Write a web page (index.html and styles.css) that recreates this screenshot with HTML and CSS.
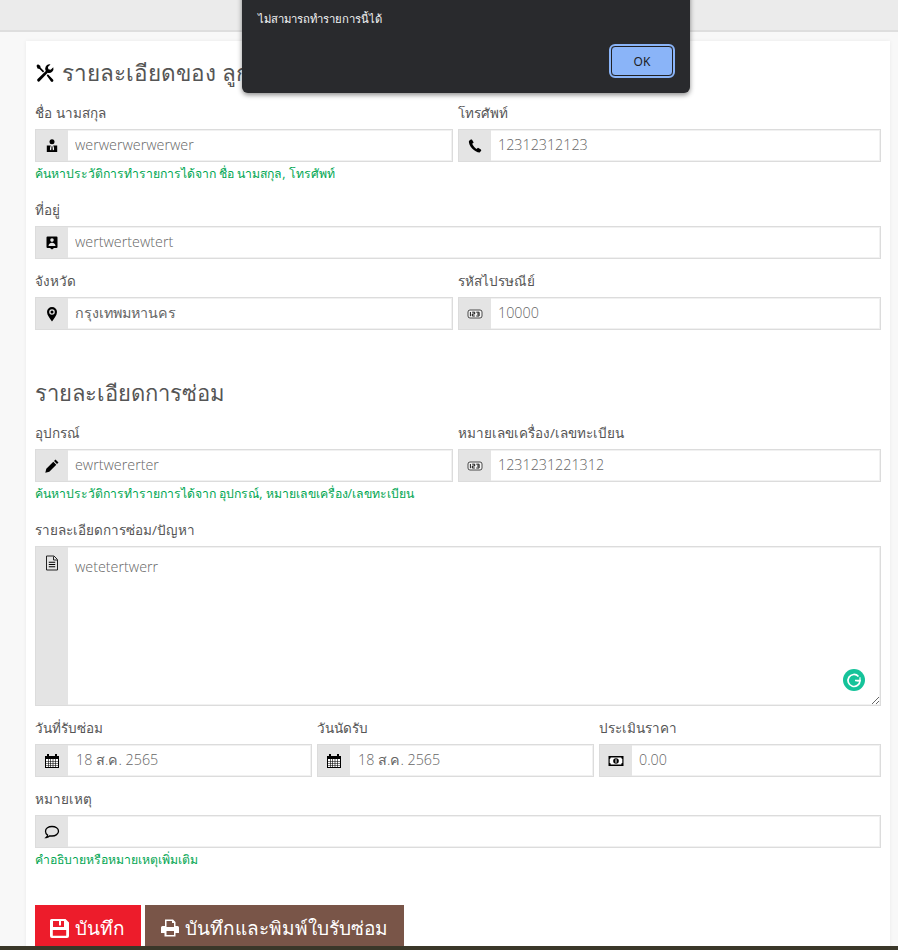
FILE: index.html
```html
<!DOCTYPE html>
<html lang="th">
<head>
<meta charset="utf-8">
<title>รายละเอียด</title>
<link rel="stylesheet" href="styles.css">
</head>
<body>
<svg class="defs" width="0" height="0">
  <defs>
    <symbol id="i-user" viewBox="0 0 16 16"><circle cx="8" cy="3.800" r="2.500"/><path d="M2.800 7.600h3.700L8 9.200l1.500-1.600h3.700v6.400H2.800z"/><path d="M6.400 7.800 7.500 9.600 7.100 12.600 5.900 11.400zM9.600 7.800 8.500 9.600 8.900 12.600 10.100 11.400z" fill="#fff"/></symbol>
    <symbol id="i-phone" viewBox="0 0 16 16"><path d="M3.800 1.500 1.900 3c-.6 4.700 5.700 11.500 10.800 11.500l1.600-2-.4-1-2.900-1.700-1.500 1.300C7.900 9.700 6 7.600 5.200 5.700l1.500-1.200-1.800-3z"/></symbol>
    <symbol id="i-contact" viewBox="0 0 16 16"><path d="M3.500 1.500h9a1 1 0 0 1 1 1v9.500a1 1 0 0 1-1 1H10l-2 1.500L6 13H3.500a1 1 0 0 1-1-1V2.500a1 1 0 0 1 1-1zM8 3.300A1.800 1.800 0 1 0 8 6.900a1.800 1.800 0 0 0 0-3.600zM4.500 11h7c0-2.200-1.500-3-3.500-3.300-2 .3-3.500 1.100-3.500 3.300z" fill-rule="evenodd"/></symbol>
    <symbol id="i-pin" viewBox="0 0 16 16"><path d="M8 1a5 5 0 0 1 5 5c0 3.200-3 6.500-5 9.500C6 12.500 3 9.200 3 6a5 5 0 0 1 5-5zm0 2.200a2.800 2.800 0 1 0 0 5.600 2.800 2.800 0 0 0 0-5.600zm0 1.300a1.500 1.500 0 1 1 0 3 1.500 1.500 0 0 1 0-3z" fill-rule="evenodd"/></symbol>
    <symbol id="i-num" viewBox="0 0 16 16"><rect x="1" y="4" width="14" height="8" rx="2" fill="#f4f4f4" stroke="#222" stroke-width=".8"/><path d="M3.400 6v4.200M5.200 6.200H7.700V8H5.300v2H7.800M9.300 6.200h2.800V8H10M12.100 8v2H9.300" fill="none" stroke="#000" stroke-width=".9"/></symbol>
    <symbol id="i-pencil" viewBox="0 0 16 16"><path d="M11.500 1.500l3 3-1.500 1.500-3-3zM9.300 3.700l3 3-7 7-4 1 1-4z"/></symbol>
    <symbol id="i-file" viewBox="0 0 16 16"><path d="M2.500 1h7.500l3.500 3.500V15h-11zM9.500 1.500v3.500h3.500" fill="none" stroke="#222" stroke-width="1"/><path d="M4.800 6.800h6.400v1H4.800zM4.800 9h6.400v1H4.800zM4.800 11.200h6.400v1H4.800z"/></symbol>
    <symbol id="i-cal" viewBox="0 0 16 16"><path d="M3 1h2v2h6V1h2v2h2v12H1V3h2z"/><path d="M2 6h12v8H2z" fill="#fff"/><path d="M2 8h12v.6H2zM2 10h12v.6H2zM2 12h12v.6H2zM4 6h.6v8H4zM6.300 6h.6v8h-.6zM8.700 6h.6v8h-.6zM11 6h.6v8H11z"/></symbol>
    <symbol id="i-money" viewBox="0 0 16 16"><path d="M.5 3h15v10H.5z"/><path d="M2.700 4.500h10.600c0 .9.500 1.400 1 1.400v4.200c-.5 0-1 .5-1 1.400H2.700c0-.9-.5-1.400-1-1.400V5.900c.5 0 1-.5 1-1.400z" fill="#fff"/><circle cx="8" cy="8" r="2.800"/><path d="M7.500 6.300h1v3.400h-1z" fill="#fff"/></symbol>
    <symbol id="i-comment" viewBox="0 0 16 16"><path d="M8 2.500c3.600 0 6.500 2 6.500 4.700S11.600 12 8 12c-.7 0-1.400-.1-2-.2-.9.900-2.200 1.600-3.800 1.700.8-.7 1.300-1.500 1.400-2.400C2.300 10.200 1.500 8.800 1.500 7.200c0-2.700 2.900-4.700 6.500-4.700z" fill="none" stroke="#000" stroke-width="1.300"/></symbol>
    <symbol id="i-tools" viewBox="0 0 20 20"><path d="M14 1.200a4.500 4.500 0 0 1 1.500.2l-2.600 2.600.5 2.300 2.300.5 2.600-2.600a4.500 4.500 0 0 1-5.600 5.600l-7.900 8.300a1.500 1.500 0 0 1-2.600-1.300 1.500 1.500 0 0 1 .4-.8l8.200-8.100A4.500 4.500 0 0 1 14 1.200z"/><path d="M1.500 2.700 2.900 1.300 5.200 2.700l.5 2 3.500 3.500-1.200 1.200-3.500-3.500-2-.5zM11.700 12.400l1.200-1.200 5.100 5.300a1.500 1.500 0 0 1 0 2 1.500 1.500 0 0 1-2 0z"/></symbol>
    <symbol id="i-save" viewBox="0 0 21 21"><path d="M2.500 1h14l3.500 3.500V18a2 2 0 0 1-2 2H3a2 2 0 0 1-2-2V2.500A1.500 1.500 0 0 1 2.500 1zM4 3v6h11V3H12v4.500h-2V3zm-.2 9v5.800h13.400V12z" fill-rule="evenodd"/></symbol>
    <symbol id="i-print" viewBox="0 0 20 20"><path d="M5 1.500h8l2.500 2.500v4h2A1.500 1.500 0 0 1 19 9.500V15h-3.500v3.500h-11V15H1V9.500A1.500 1.500 0 0 1 2.500 8h2.500zm1.500 1.500V9h7.500V5h-2V3zm0 10v4h7.500v-4z" fill-rule="evenodd"/></symbol>
  </defs>
</svg>

<header class="topbar"></header>

<main class="page">
  <section class="card">
    <h2 class="title"><svg class="title-icon"><use href="#i-tools"/></svg> รายละเอียดของ ลูกค้า</h2>

    <div class="row">
      <div class="col half">
        <label class="label">ชื่อ นามสกุล</label>
        <div class="field"><span class="addon"><svg class="icon"><use href="#i-user"/></svg></span><input class="control" value="werwerwerwerwer"></div>
        <p class="help">ค้นหาประวัติการทำรายการได้จาก ชื่อ นามสกุล, โทรศัพท์</p>
      </div>
      <div class="col half">
        <label class="label">โทรศัพท์</label>
        <div class="field"><span class="addon"><svg class="icon"><use href="#i-phone"/></svg></span><input class="control" value="12312312123"></div>
      </div>
    </div>

    <div class="row">
      <div class="col full">
        <label class="label">ที่อยู่</label>
        <div class="field"><span class="addon"><svg class="icon"><use href="#i-contact"/></svg></span><input class="control" value="wertwertewtert"></div>
      </div>
    </div>

    <div class="row">
      <div class="col half">
        <label class="label">จังหวัด</label>
        <div class="field"><span class="addon"><svg class="icon"><use href="#i-pin"/></svg></span><input class="control" value="กรุงเทพมหานคร"></div>
      </div>
      <div class="col half">
        <label class="label">รหัสไปรษณีย์</label>
        <div class="field"><span class="addon"><svg class="icon"><use href="#i-num"/></svg></span><input class="control" value="10000"></div>
      </div>
    </div>

    <h2 class="subtitle">รายละเอียดการซ่อม</h2>

    <div class="row">
      <div class="col half">
        <label class="label">อุปกรณ์</label>
        <div class="field"><span class="addon"><svg class="icon"><use href="#i-pencil"/></svg></span><input class="control" value="ewrtwererter"></div>
        <p class="help">ค้นหาประวัติการทำรายการได้จาก อุปกรณ์, หมายเลขเครื่อง/เลขทะเบียน</p>
      </div>
      <div class="col half">
        <label class="label">หมายเลขเครื่อง/เลขทะเบียน</label>
        <div class="field"><span class="addon"><svg class="icon"><use href="#i-num"/></svg></span><input class="control" value="1231231221312"></div>
      </div>
    </div>

    <div class="row">
      <div class="col full">
        <label class="label">รายละเอียดการซ่อม/ปัญหา</label>
        <div class="field tall">
          <span class="addon top"><svg class="icon"><use href="#i-file"/></svg></span>
          <textarea class="control area">wetetertwerr</textarea>
          <span class="grammarly"><svg viewBox="0 0 22 22"><path d="M15.500 7.500A6 6 0 1 0 17 11.500h-5" fill="none" stroke="#fff" stroke-width="1.700"/><path d="M17 8.300v3.700h-3.500" fill="none" stroke="#fff" stroke-width="1.200"/></svg></span>
        </div>
      </div>
    </div>

    <div class="row">
      <div class="col third">
        <label class="label">วันที่รับซ่อม</label>
        <div class="field"><span class="addon"><svg class="icon"><use href="#i-cal"/></svg></span><input class="control date" value="18 ส.ค. 2565"></div>
      </div>
      <div class="col third">
        <label class="label">วันนัดรับ</label>
        <div class="field"><span class="addon"><svg class="icon"><use href="#i-cal"/></svg></span><input class="control date" value="18 ส.ค. 2565"></div>
      </div>
      <div class="col third">
        <label class="label">ประเมินราคา</label>
        <div class="field"><span class="addon"><svg class="icon"><use href="#i-money"/></svg></span><input class="control" value="0.00"></div>
      </div>
    </div>

    <div class="row">
      <div class="col full">
        <label class="label">หมายเหตุ</label>
        <div class="field"><span class="addon"><svg class="icon"><use href="#i-comment"/></svg></span><input class="control" value=""></div>
        <p class="help">คำอธิบายหรือหมายเหตุเพิ่มเติม</p>
      </div>
    </div>

    <div class="actions">
      <button class="btn btn-red"><svg class="btn-icon btn-icon-save"><use href="#i-save"/></svg>บันทึก</button>
      <button class="btn btn-brown"><svg class="btn-icon"><use href="#i-print"/></svg>บันทึกและพิมพ์ใบรับซ่อม</button>
    </div>
  </section>
</main>

<div class="taskbar"></div>

<div class="dialog" role="alertdialog">
  <p class="dialog-text">ไม่สามารถทำรายการนี้ได้</p>
  <div class="dialog-actions"><button class="dialog-ok">OK</button></div>
</div>
</body>
</html>
```

FILE: styles.css
```css
* { box-sizing: border-box; }
html, body { height: 950px; overflow: hidden; }
body {
  margin: 0;
  background: #f8f8f8;
  color: #555;
  font-family: "Open Sans", "Noto Sans", "Noto Sans CJK SC", sans-serif;
  font-size: 14px;
  position: relative;
}
.defs { position: absolute; }
.topbar { height: 32px; background: #ebebeb; border-bottom: 2px solid #dedede; }
.page { padding: 9px 8px 0 26px; }
.card {
  background: #fff;
  padding: 0 9px 40px;
  box-shadow: 0 0 4px rgba(0,0,0,.06);
}
.title {
  margin: 0;
  height: 60px;
  padding-top: 3px;
  display: flex;
  align-items: center;
  gap: 7px;
  font-size: 22.500px;
  font-weight: 300;
  line-height: 32px;
  color: #555;
}
.title-icon { width: 20px; height: 20px; flex: none; }
.subtitle {
  margin: 0;
  height: 81px;
  padding-top: 34px;
  font-size: 22px;
  font-weight: 300;
  line-height: 36px;
  color: #555;
}
.row { display: flex; }
.col { padding-right: 5px; margin-bottom: 10px; }
.col:last-child { padding-right: 0; }
.half { flex: 0 0 50%; }
.third { flex: 0 0 33.3333%; }
.full { flex: 0 0 100%; }
.label { display: block; height: 28px; line-height: 24px; font-size: 13.500px; color: #555; }
.field {
  display: flex;
  position: relative;
  height: 33px;
  border: 1px solid #dcdcdc;
  box-shadow: inset 0 0 0 1px #f1f1f1;
  background: #fff;
}
.field.tall { height: 160px; }
.addon {
  flex: 0 0 32px;
  background: #e4e4e4;
  display: flex;
  align-items: center;
  justify-content: center;
}
.addon.top { align-items: flex-start; padding-top: 8px; }
.icon { width: 16px; height: 16px; fill: #000; }
.control {
  flex: 1;
  min-width: 0;
  border: 0;
  outline: 0;
  padding: 0 7px 2px;
  background: transparent;
  color: #666;
  font: inherit;
  font-size: 14.300px;
  font-weight: 300;
}
.date { padding-left: 8px; }
.area { padding-top: 10px; resize: both; line-height: 20px; }
.help { margin: 2px 0 4px; height: 20px; line-height: 20px; font-size: 12.250px; color: #00a651; }
.grammarly {
  position: absolute;
  right: 15px;
  bottom: 14px;
  width: 22px;
  height: 22px;
  border-radius: 50%;
  background: #15c39a;
}
.grammarly svg { display: block; width: 22px; height: 22px; }
.actions { display: flex; gap: 4px; padding-top: 21px; }
.btn {
  height: 46px;
  border: 0;
  padding: 0 0 0 15px;
  display: flex;
  align-items: center;
  gap: 5px;
  color: #fff;
  font-family: inherit;
  font-size: 19px;
  line-height: 1;
  white-space: nowrap;
}
.btn-icon { width: 20px; height: 20px; fill: #fff; flex: none; }
.btn-icon-save { width: 21px; height: 21px; margin-left: -1px; }
.btn-red { background: #ed1c2b; width: 106px; }
.btn-brown { background: #795548; width: 259px; }
.taskbar {
  position: absolute;
  left: 0;
  right: 0;
  bottom: 0;
  height: 4px;
  background: #3a3729;
}
.dialog {
  position: absolute;
  left: 242px;
  top: -20px;
  width: 448px;
  height: 113px;
  padding: 31px 17px 17px 16px;
  background: #292a2d;
  border-radius: 0 0 6px 6px;
  box-shadow: 0 2px 5px rgba(0,0,0,.45);
  display: flex;
  flex-direction: column;
  justify-content: space-between;
}
.dialog-text { margin: 0; font-size: 11.300px; line-height: 16px; color: #f4f5f6; }
.dialog-actions { display: flex; justify-content: flex-end; }
.dialog-ok {
  width: 62px;
  height: 30px;
  background: #8ab4f8;
  color: #202124;
  border: 1px solid #202124;
  border-radius: 4px;
  outline: 2px solid #8ab4f8;
  outline-offset: 0;
  font-family: "Noto Sans", sans-serif;
  font-size: 12px;
}
```
